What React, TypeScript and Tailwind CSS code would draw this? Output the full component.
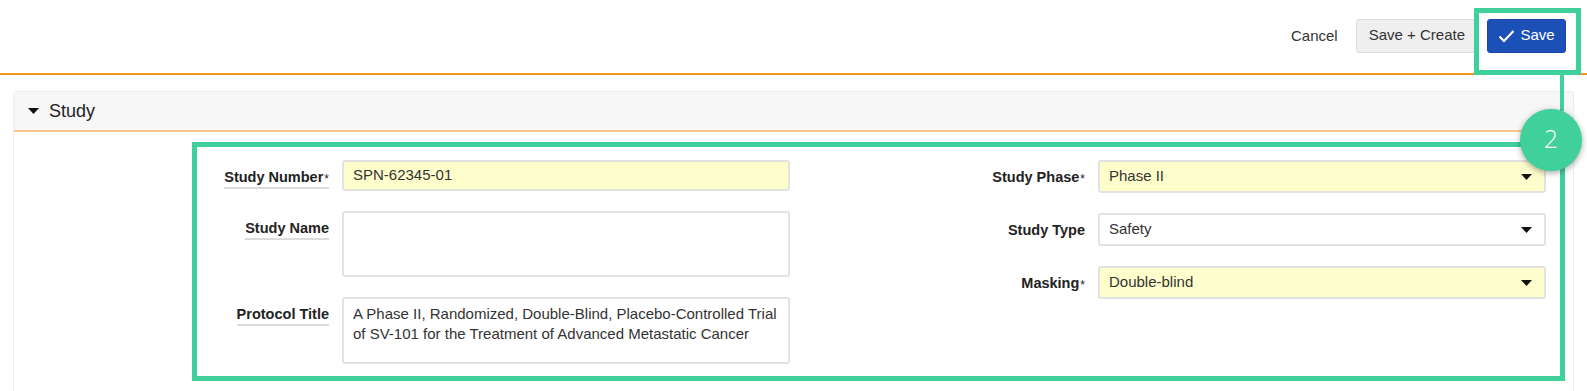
import React from "react";

function Caret({ className = "" }: { className?: string }) {
  return (
    <svg width="11" height="6" viewBox="0 0 11 6" className={className}>
      <path d="M0 0 L11 0 L5.5 6 Z" fill="#111" />
    </svg>
  );
}

function Label({ text, required, help }: { text: string; required?: boolean; help?: boolean }) {
  return (
    <div className="w-[150px] shrink-0 flex items-start justify-end pt-[8px]">
      <span
        className={`text-[14.5px] leading-[18px] font-bold text-[#222] ${
          help ? "border-b-2 border-[#dcdcdc] pb-[1px]" : ""
        }`}
      >
        {text}
        {required && <sup className="text-[12px] font-normal ml-[1px] relative top-[1px]">*</sup>}
      </span>
    </div>
  );
}

function Select({ value, yellow }: { value: string; yellow?: boolean }) {
  return (
    <div
      className={`w-[448px] h-[33px] border-2 border-[#e2e2e2] rounded-[3px] flex items-center justify-between pl-[9px] pr-[12px] text-[15px] text-[#333] ${
        yellow ? "bg-[#fefecd]" : "bg-white"
      }`}
    >
      <span>{value}</span>
      <Caret />
    </div>
  );
}

export default function App() {
  return (
    <main className="relative w-[1587px] h-[391px] overflow-hidden bg-white font-['Liberation_Sans',Arial,sans-serif] text-[#333]">
      {/* ================= TOP BAR ================= */}
      <header className="h-[75px] border-b-2 border-[#f7941d] flex items-center justify-end pr-[21px] pb-[2px]">
        <button className="text-[15px] text-[#333] mr-[18px] mt-[1px]">Cancel</button>
        <button className="h-[34px] px-[12px] bg-[#efefef] border border-[#dcdcdc] rounded-[3px] text-[15px] text-[#333] mr-[9px]">
          Save + Create
        </button>
        <button className="h-[34px] w-[79px] bg-[#1b50b6] border border-[#174aa8] rounded-[3px] text-[15px] text-white flex items-center justify-center gap-[5px]">
          <svg width="17" height="14" viewBox="0 0 17 14">
            <path d="M1.5 7.5 L6 12 L15.5 2" fill="none" stroke="#fff" strokeWidth="2.2" />
          </svg>
          Save
        </button>
      </header>

      {/* ================= STUDY PANEL ================= */}
      <section className="mx-[13px] mt-[16px] border border-[#ececec] rounded-[3px]">
        <div className="h-[40px] bg-[#f7f7f7] border-b-2 border-[#fcc58a] flex items-center pl-[14px] gap-[10px]">
          <Caret />
          <span className="text-[18px] text-[#222]">Study</span>
        </div>

        <div className="bg-white pt-[28px] pl-[165px] pb-[40px] flex items-start">
          {/* LEFT COLUMN */}
          <div className="flex flex-col gap-[20px]">
            <div className="flex items-start gap-[13px]">
              <Label text="Study Number" required help />
              <div className="w-[448px] h-[31px] border-2 border-[#e2e2e2] rounded-[3px] bg-[#fefecd] flex items-center pl-[9px] text-[15px] text-[#333]">
                SPN-62345-01
              </div>
            </div>
            <div className="flex items-start gap-[13px]">
              <Label text="Study Name" help />
              <div className="w-[448px] h-[66px] border-2 border-[#e2e2e2] rounded-[3px] bg-white" />
            </div>
            <div className="flex items-start gap-[13px]">
              <Label text="Protocol Title" help />
              <div className="w-[448px] h-[67px] border-2 border-[#e2e2e2] rounded-[3px] bg-white pl-[9px] pt-[5px] text-[15px] leading-[20px] text-[#333] whitespace-nowrap">
                A Phase II, Randomized, Double-Blind, Placebo-Controlled Trial
                <br />
                of SV-101 for the Treatment of Advanced Metastatic Cancer
              </div>
            </div>
          </div>

          {/* RIGHT COLUMN */}
          <div className="flex flex-col gap-[20px] ml-[145px]">
            <div className="flex items-start gap-[13px]">
              <Label text="Study Phase" required />
              <Select value="Phase II" yellow />
            </div>
            <div className="flex items-start gap-[13px]">
              <Label text="Study Type" />
              <Select value="Safety" />
            </div>
            <div className="flex items-start gap-[13px]">
              <Label text="Masking" required />
              <Select value="Double-blind" yellow />
            </div>
          </div>
        </div>
      </section>

      {/* ================= ANNOTATIONS ================= */}
      <div className="absolute left-[1474px] top-[8px] w-[107px] h-[67px] border-[5px] border-[#40d09c]" />
      <div className="absolute left-[1560px] top-[75px] w-[4px] h-[36px] bg-[#40d09c]" />
      <div className="absolute left-[192px] top-[142px] w-[1373px] h-[239px] border-[5px] border-[#40d09c]" />
      <div className="absolute left-[1520px] top-[109px] w-[62px] h-[62px] rounded-full bg-[#40d09c] shadow-[0_2px_6px_rgba(0,0,0,0.35)] flex items-center justify-center text-white text-[25px] leading-none font-light font-['Open_Sans',sans-serif]">
        <span className="-translate-y-[2px]">2</span>
      </div>
    </main>
  );
}
